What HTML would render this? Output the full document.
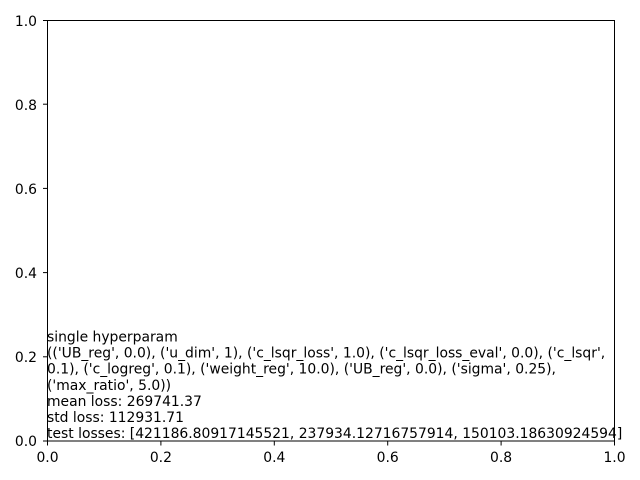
<!DOCTYPE html>
<html><head><meta charset="utf-8"><style>
html,body{margin:0;padding:0;background:#fff;width:640px;height:480px;overflow:hidden}
svg{display:block}
text{font-family:"DejaVu Sans","Liberation Sans",sans-serif;font-size:13.9px;fill:#000}
</style></head><body>
<svg width="640" height="480" viewBox="0 0 640 480">
<rect x="47.5" y="20.5" width="567" height="420.5" fill="none" stroke="#000" stroke-width="1"/>
<g stroke="#000" stroke-width="1">
<line x1="43" y1="441" x2="47.5" y2="441"/>
<line x1="43" y1="356.8" x2="47.5" y2="356.8"/>
<line x1="43" y1="272.6" x2="47.5" y2="272.6"/>
<line x1="43" y1="188.4" x2="47.5" y2="188.4"/>
<line x1="43" y1="104.2" x2="47.5" y2="104.2"/>
<line x1="43" y1="20.5" x2="47.5" y2="20.5"/>
<line x1="47.5" y1="441" x2="47.5" y2="445.5"/>
<line x1="160.9" y1="441" x2="160.9" y2="445.5"/>
<line x1="274.3" y1="441" x2="274.3" y2="445.5"/>
<line x1="387.7" y1="441" x2="387.7" y2="445.5"/>
<line x1="501.1" y1="441" x2="501.1" y2="445.5"/>
<line x1="614.5" y1="441" x2="614.5" y2="445.5"/>
</g>
<g text-anchor="end">
<text x="37" y="446">0.0</text>
<text x="37" y="362">0.2</text>
<text x="37" y="278">0.4</text>
<text x="37" y="194">0.6</text>
<text x="37" y="110">0.8</text>
<text x="37" y="26">1.0</text>
</g>
<g text-anchor="middle">
<text x="47.5" y="462">0.0</text>
<text x="160.9" y="462">0.2</text>
<text x="274.3" y="462">0.4</text>
<text x="387.7" y="462">0.6</text>
<text x="501.1" y="462">0.8</text>
<text x="614.5" y="462">1.0</text>
</g>
<g>
<text x="47" y="341.5">single hyperparam</text>
<text x="47" y="357.6">(('UB_reg', 0.0), ('u_dim', 1), ('c_lsqr_loss', 1.0), ('c_lsqr_loss_eval', 0.0), ('c_lsqr',</text>
<text x="47" y="373.7">0.1), ('c_logreg', 0.1), ('weight_reg', 10.0), ('UB_reg', 0.0), ('sigma', 0.25),</text>
<text x="47" y="389.8">('max_ratio', 5.0))</text>
<text x="47" y="405.9">mean loss: 269741.37</text>
<text x="47" y="422">std loss: 112931.71</text>
<text x="47" y="438.1">test losses: [421186.80917145521, 237934.12716757914, 150103.18630924594]</text>
</g>
</svg>
</body></html>
